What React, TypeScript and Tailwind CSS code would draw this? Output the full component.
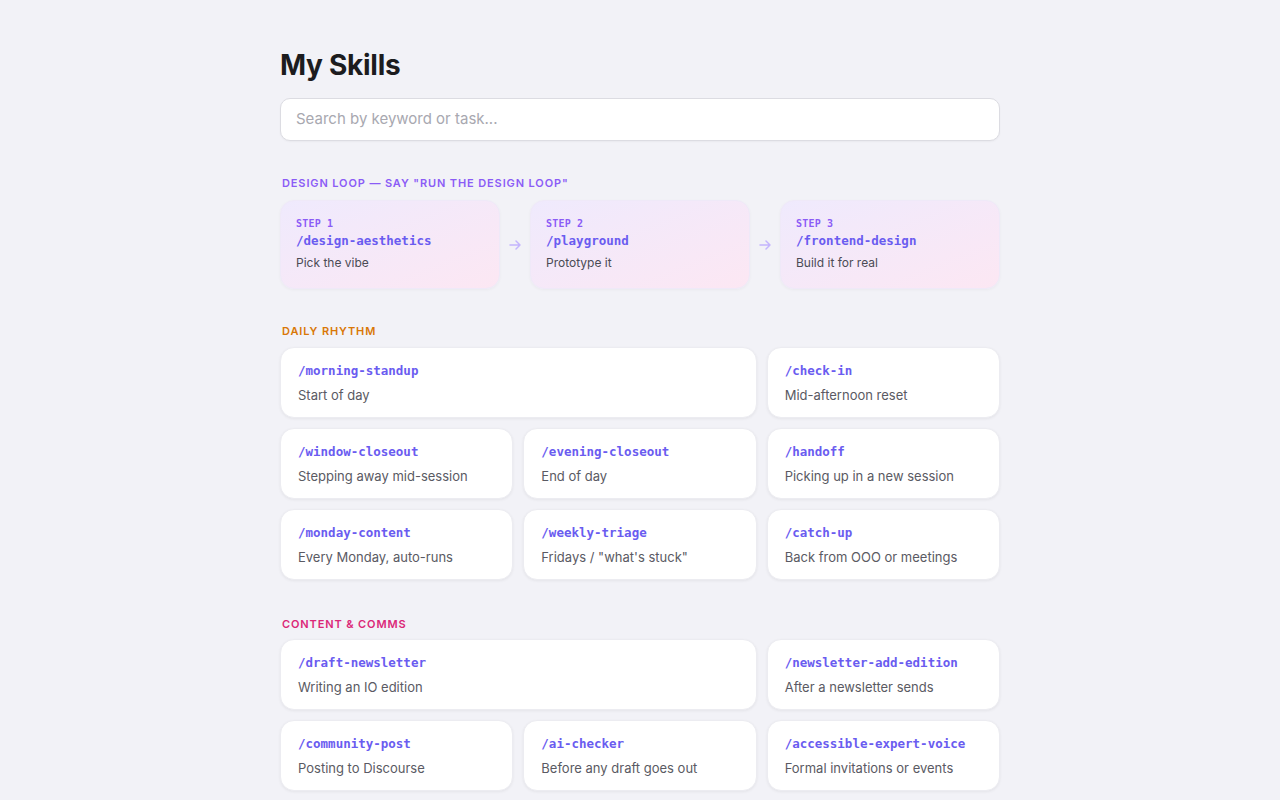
import React from "react";

const mono = "font-['DejaVu_Sans_Mono','Liberation_Mono',monospace]";

type Skill = { cmd: string; desc: string; span?: boolean };

const daily: Skill[] = [
  { cmd: "/morning-standup", desc: "Start of day", span: true },
  { cmd: "/check-in", desc: "Mid-afternoon reset" },
  { cmd: "/window-closeout", desc: "Stepping away mid-session" },
  { cmd: "/evening-closeout", desc: "End of day" },
  { cmd: "/handoff", desc: "Picking up in a new session" },
  { cmd: "/monday-content", desc: "Every Monday, auto-runs" },
  { cmd: "/weekly-triage", desc: 'Fridays / "what\'s stuck"' },
  { cmd: "/catch-up", desc: "Back from OOO or meetings" },
];

const content: Skill[] = [
  { cmd: "/draft-newsletter", desc: "Writing an IO edition", span: true },
  { cmd: "/newsletter-add-edition", desc: "After a newsletter sends" },
  { cmd: "/community-post", desc: "Posting to Discourse" },
  { cmd: "/ai-checker", desc: "Before any draft goes out" },
  { cmd: "/accessible-expert-voice", desc: "Formal invitations or events" },
];

const steps = [
  { step: "STEP 1", cmd: "/design-aesthetics", desc: "Pick the vibe" },
  { step: "STEP 2", cmd: "/playground", desc: "Prototype it" },
  { step: "STEP 3", cmd: "/frontend-design", desc: "Build it for real" },
];

function Card({ s }: { s: Skill }) {
  return (
    <div
      className={`${s.span ? "col-span-2" : ""} h-[71px] rounded-[14px] bg-white px-[17px] pt-[15px] shadow-[0_1px_3px_rgba(0,0,0,0.06)] border border-[#ececf1]`}
    >
      <div className={`${mono} text-[12.5px] font-bold leading-[16px] text-[#6a5cf0]`}>{s.cmd}</div>
      <div className="mt-[7px] text-[13px] leading-[18px] text-[#5a5a63]">{s.desc}</div>
    </div>
  );
}

function Arrow() {
  return (
    <div className="flex w-[30px] shrink-0 items-center justify-center">
      <svg width="14" height="14" viewBox="0 0 14 14" fill="none" stroke="#c4b5fd" strokeWidth="1.5" strokeLinecap="round" strokeLinejoin="round">
        <path d="M2 7h10M8 3l4 4-4 4" />
      </svg>
    </div>
  );
}

export default function App() {
  return (
    <div className="min-h-screen bg-[#f2f2f7] font-['Inter','Noto_Sans',sans-serif]">
      <div className="mx-auto w-[720px] pt-[47px] pb-10">
        <h1 className="text-[28px] font-bold leading-[36px] tracking-[-0.01em] text-[#1c1c1e]">My Skills</h1>
        <div className="mt-[15px] flex h-[43px] items-center rounded-[10px] border border-[#dcdce2] bg-white px-[15px] shadow-[0_1px_2px_rgba(0,0,0,0.04)]">
          <span className="text-[15px] text-[#a8a8b0]">Search by keyword or task...</span>
        </div>

        <div className="mt-[35px] px-[2px] text-[11px] font-semibold uppercase leading-[14px] tracking-[0.08em] text-[#8b5cf6]">
          Design Loop — say "run the design loop"
        </div>
        <div className="mt-[10px] flex">
          {steps.map((s, i) => (
            <React.Fragment key={s.step}>
              {i > 0 && <Arrow />}
              <div className="h-[89px] w-[220px] flex-1 rounded-[14px] border border-[#efe9f8] bg-gradient-to-br from-[#efeafd] to-[#fce7f3] px-[15px] pt-[16px] shadow-[0_1px_3px_rgba(0,0,0,0.04)]">
                <div className={`${mono} text-[10px] font-bold leading-[14px] tracking-[0.02em] text-[#8b5cf6]`}>{s.step}</div>
                <div className={`${mono} mt-[2px] text-[12.5px] font-bold leading-[16px] text-[#6a5cf0]`}>{s.cmd}</div>
                <div className="mt-[6px] text-[12px] leading-[16px] text-[#4b4b55]">{s.desc}</div>
              </div>
            </React.Fragment>
          ))}
        </div>

        <div className="mt-[35px] px-[2px] text-[11px] font-semibold uppercase leading-[14px] tracking-[0.08em] text-[#d97706]">
          Daily Rhythm
        </div>
        <div className="mt-[9px] grid grid-cols-3 gap-[10px]">
          {daily.map((s) => (
            <Card key={s.cmd} s={s} />
          ))}
        </div>

        <div className="mt-[37px] px-[2px] text-[11px] font-semibold uppercase leading-[14px] tracking-[0.08em] text-[#db2777]">
          Content &amp; Comms
        </div>
        <div className="mt-[8px] grid grid-cols-3 gap-[10px]">
          {content.map((s) => (
            <Card key={s.cmd} s={s} />
          ))}
        </div>
      </div>
    </div>
  );
}
